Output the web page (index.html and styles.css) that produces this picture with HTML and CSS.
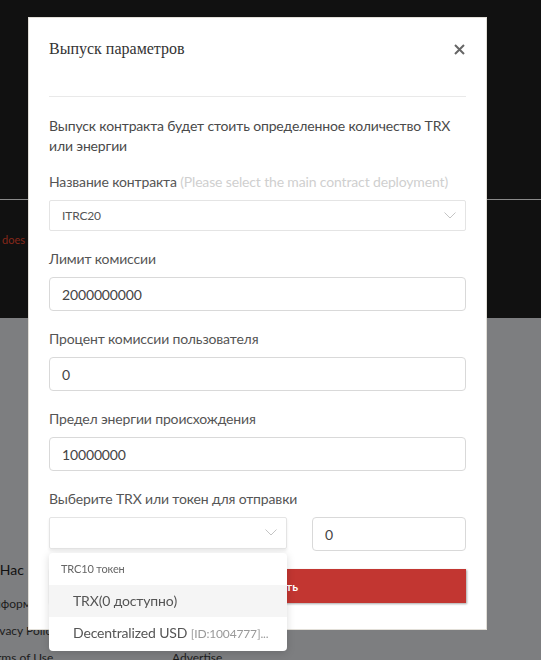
FILE: index.html
```html
<!doctype html>
<html lang="ru">
<head>
    <meta charset="utf-8">
    <title>Выпуск параметров</title>
    <meta name="viewport" content="width=device-width, initial-scale=1.0">
    <link rel="stylesheet" href="styles.css">
</head>
<body>
    <div class="page-top">
        <div class="page-header"></div>
        <div class="page-error">does</div>
    </div>
    <div class="page-footer">
        <div class="footer-col">
            <div class="footer-title">О Нас</div>
            <div class="footer-link">Информация</div>
            <div class="footer-link">Privacy Policy</div>
            <div class="footer-link">Terms of Use</div>
        </div>
        <div class="footer-col">
            <div class="footer-title">&nbsp;</div>
            <div class="footer-link">&nbsp;</div>
            <div class="footer-link">&nbsp;</div>
            <div class="footer-link">Advertise</div>
        </div>
    </div>

    <div class="modal">
        <div class="modal-header">
            <div class="modal-title">Выпуск параметров</div>
            <svg class="modal-close" width="11" height="11" viewBox="0 0 11 11">
                <path d="M1 1 L10 10 M10 1 L1 10" stroke="#666" stroke-width="2" fill="none"/>
            </svg>
        </div>
        <div class="modal-body">
            <p class="intro">Выпуск контракта будет стоить определенное количество TRX или энергии</p>

            <div class="field">
                <div class="field-label">Название контракта <span class="hint">(Please select the main contract deployment)</span></div>
                <div class="select">
                    <span class="select-value">ITRC20</span>
                    <svg class="chevron" width="12" height="7" viewBox="0 0 12 7">
                        <polyline points="0.5,0.5 6,6 11.5,0.5" stroke="#c4c4c4" stroke-width="1" fill="none"/>
                    </svg>
                </div>
            </div>

            <div class="field">
                <div class="field-label">Лимит комиссии</div>
                <div class="input">2000000000</div>
            </div>

            <div class="field">
                <div class="field-label">Процент комиссии пользователя</div>
                <div class="input">0</div>
            </div>

            <div class="field">
                <div class="field-label">Предел энергии происхождения</div>
                <div class="input">10000000</div>
            </div>

            <div class="field">
                <div class="field-label">Выберите TRX или токен для отправки</div>
                <div class="send-row">
                    <div class="select select-open">
                        <span class="select-value"></span>
                        <svg class="chevron" width="12" height="7" viewBox="0 0 12 7">
                            <polyline points="0.5,0.5 6,6 11.5,0.5" stroke="#c4c4c4" stroke-width="1" fill="none"/>
                        </svg>
                        <div class="dropdown">
                            <div class="dropdown-group">TRC10 токен</div>
                            <div class="dropdown-item active">TRX(0 доступно)</div>
                            <div class="dropdown-item">Decentralized USD <span class="token-id">[ID:1004777]...</span></div>
                        </div>
                    </div>
                    <div class="input">0</div>
                </div>
            </div>

            <button class="deploy-btn">Опубликовать</button>
        </div>
    </div>
</body>
</html>
```

FILE: styles.css
```css
body {
    margin: 0;
    background-color: #7d7e80;
    font-family: Lato, 'Noto Sans', sans-serif;
    font-size: 14px;
    color: #333;
    overflow: hidden;
    height: 660px;
}
.page-top {
    background-color: #111;
    height: 318px;
}
.page-header {
    height: 199px;
    border-bottom: 1px solid #8a8a8a;
}
.page-error {
    padding: 33px 0 0 2px;
    font-size: 11px;
    line-height: 14px;
    color: #86281a;
}
.page-footer {
    display: flex;
    gap: 77px;
    margin-left: -15px;
    padding-top: 242px;
}
.footer-col {
    width: 110px;
}
.footer-title {
    font-size: 14px;
    line-height: 20px;
    color: #111;
    margin-bottom: 16px;
}
.footer-link {
    font-size: 12px;
    line-height: 16px;
    color: #1c1c1c;
    margin-top: 11px;
    white-space: nowrap;
}

/* modal */
.modal {
    position: fixed;
    top: 17px;
    left: 28px;
    width: 459px;
    box-sizing: border-box;
    background-color: #fff;
    border: 1px solid #e2dfd8;
    padding: 0 20px 26px;
    letter-spacing: -0.15px;
}
.modal-header {
    display: flex;
    justify-content: space-between;
    align-items: center;
    padding: 21px 0 37px;
    border-bottom: 1px solid #e9e9e9;
}
.modal-title {
    font-family: 'Liberation Serif', serif;
    font-size: 16px;
    line-height: 20px;
    color: #333;
    letter-spacing: 0;
}
.modal-close {
    margin-right: 1px;
    cursor: pointer;
}
.modal-body {
    padding-top: 19px;
}
.intro {
    margin: 0 0 16px;
    line-height: 20px;
    color: #4a4a4a;
}
.field {
    margin-bottom: 18px;
}
.field-label {
    line-height: 20px;
    color: #555;
    margin-bottom: 8px;
}
.hint {
    color: #cfcfcf;
}
.select {
    position: relative;
    height: 31px;
    box-sizing: border-box;
    border: 1px solid #e4e4e4;
    border-radius: 2px;
    display: flex;
    align-items: center;
    padding: 0 12px;
    font-size: 12px;
    color: #555;
}
.chevron {
    position: absolute;
    right: 9px;
    top: 11px;
}
.select-open {
    height: 32px;
    box-shadow: 0 2px 3px rgba(0, 0, 0, 0.08);
}
.input {
    height: 34px;
    box-sizing: border-box;
    border: 1px solid #d9d9d9;
    border-radius: 4px;
    padding: 0 12px;
    display: flex;
    align-items: center;
    color: #444;
}
.send-row {
    display: grid;
    grid-template-columns: 238px 1fr;
    column-gap: 25px;
    align-items: start;
}
.dropdown {
    position: absolute;
    top: 35px;
    left: -1px;
    width: 238px;
    background-color: #fff;
    border-radius: 4px;
    box-shadow: 0 2px 8px rgba(0, 0, 0, 0.15);
    padding-bottom: 1px;
    z-index: 10;
}
.dropdown-group {
    padding: 0 12px;
    line-height: 32px;
    font-size: 11px;
    color: #666;
}
.dropdown-item {
    padding: 0 24px;
    line-height: 32px;
    font-size: 14px;
    color: #555;
    white-space: nowrap;
}
.dropdown-item.active {
    background-color: #f5f5f5;
}
.token-id {
    font-size: 12px;
    color: #999;
}
.deploy-btn {
    display: block;
    width: 100%;
    height: 34px;
    border: none;
    background-color: #c23631;
    color: #fff;
    font-family: Lato, sans-serif;
    font-weight: bold;
    font-size: 12px;
    box-shadow: 1px 1px 2px rgba(0, 0, 0, 0.35);
    cursor: pointer;
}
```
